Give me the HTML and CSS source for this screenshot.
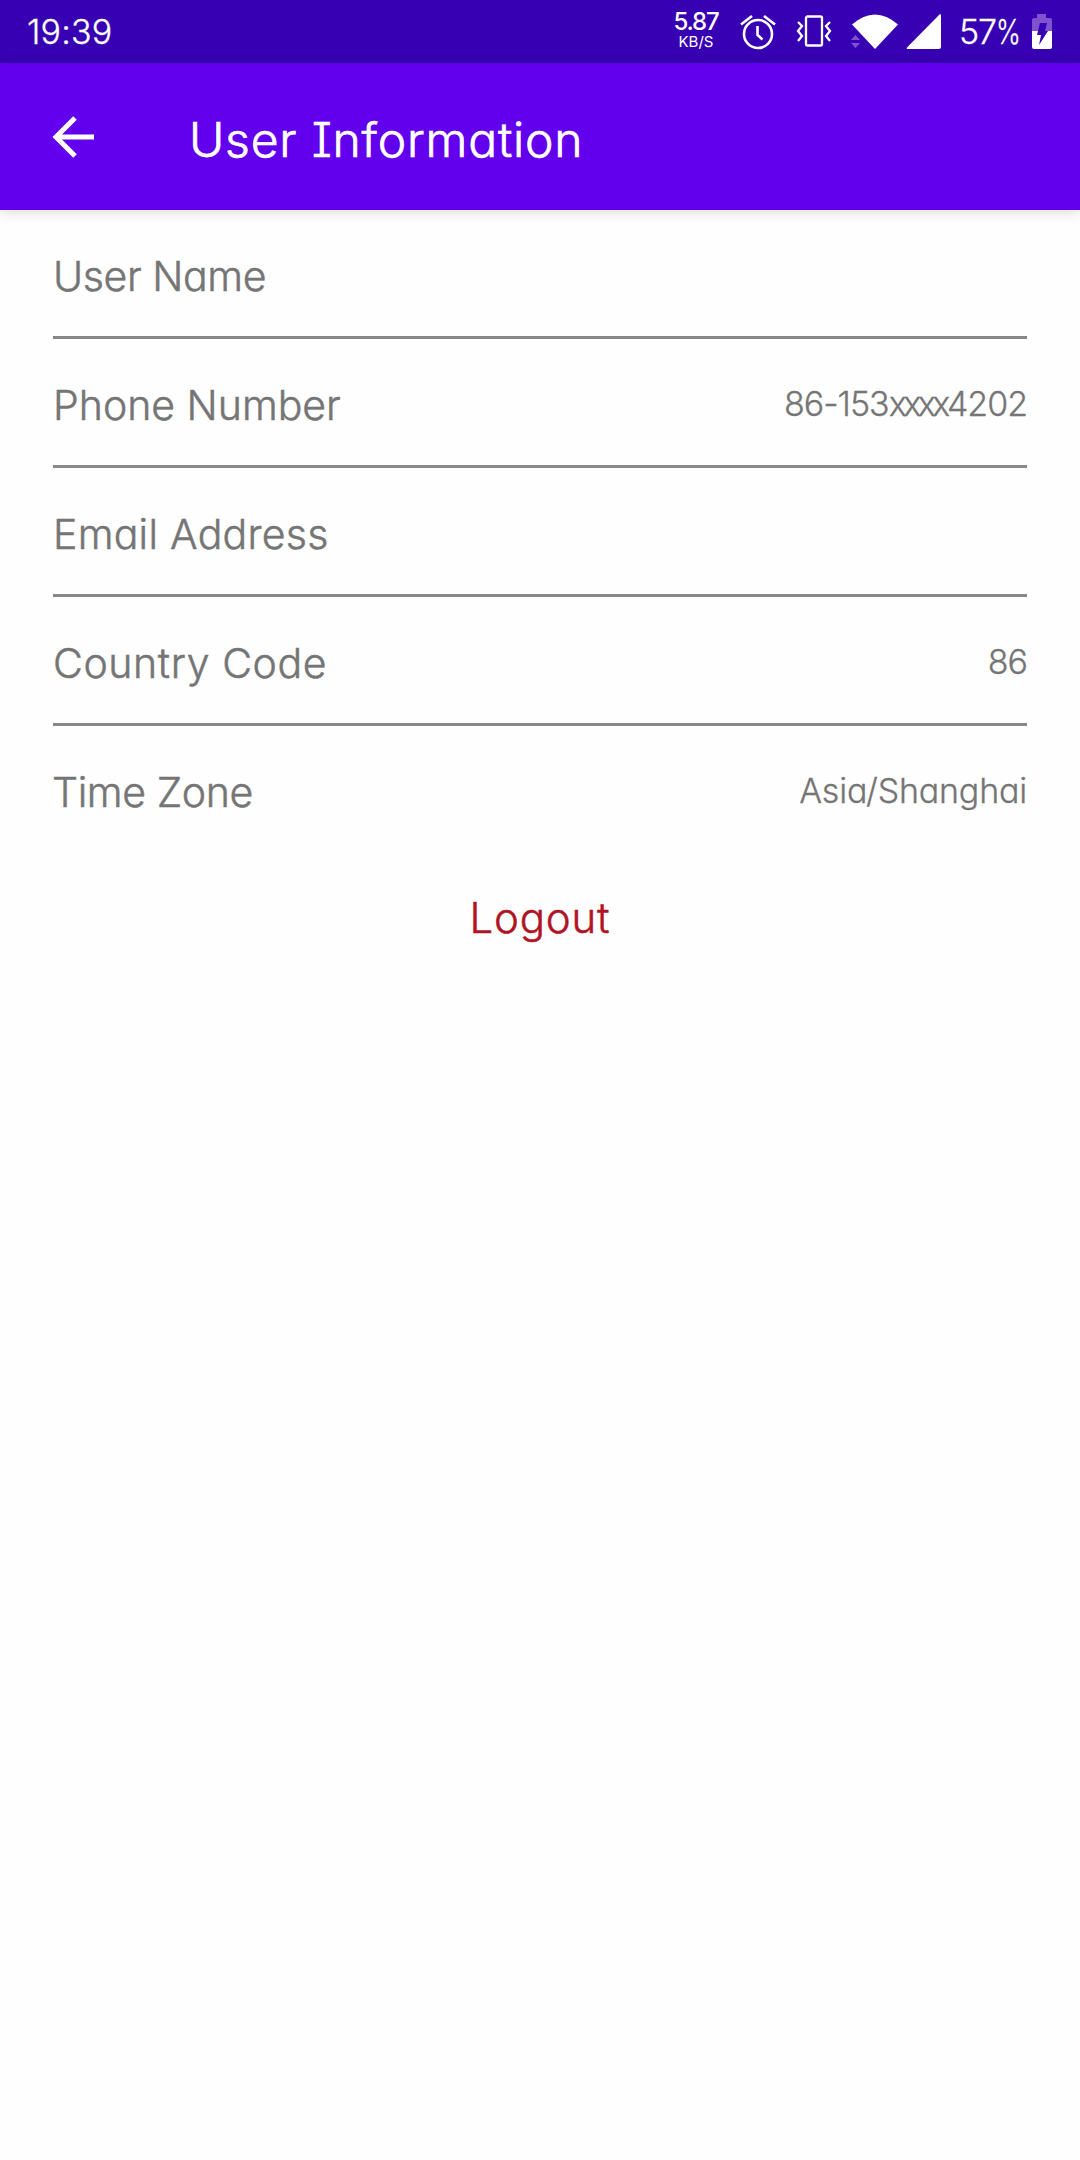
FILE: index.html
```html
<!DOCTYPE html>
<html lang="en">
<head>
<meta charset="utf-8">
<title>User Information</title>
<link rel="stylesheet" href="styles.css">
</head>
<body>
<header class="status-bar">
  <span class="clock">19:39</span>
  <div class="status-icons">
    <div class="net-speed"><span class="speed-value">5.87</span><span class="speed-unit">KB/S</span></div>
    <svg class="alarm" width="38" height="38" viewBox="0 0 38 38" fill="none" stroke="#fff" stroke-width="2.6"><circle cx="19" cy="21" r="14"/><path d="M18.500 13v9l5 4.500M2 11.500l11-8.500M25 3l11 8.500"/></svg>
    <svg class="vibrate" width="36" height="34" viewBox="0 0 36 34" fill="none" stroke="#fff" stroke-width="2.300"><rect x="10" y="2.500" width="16" height="29" rx="1.500"/><path d="M2 8l4 4-4 5 4 5-4 5M34 8l-4 4 4 5-4 5 4 5"/></svg>
    <svg class="wifi" width="48" height="36" viewBox="0 0 48 36"><path fill="#fff" d="M1 10.500Q24-9.500 47 10.500L24 35z"/><path fill="#8052d0" d="M0 26h9l-4.500-5zM0 29h9l-4.500 5z"/></svg>
    <svg class="signal" width="36" height="36" viewBox="0 0 36 36"><path fill="#fff" d="M34 0q1 0 1 1.500V33q0 2-2 2H2q-2 0-1-1.500z"/></svg>
    <span class="battery-text">57<span class="percent">%</span></span>
    <svg class="battery" width="22" height="36" viewBox="0 0 22 36"><path fill="#8052d0" d="M6 0h9v4h4q2 0 2 2v12H1V6q0-2 2-2h3z"/><path fill="#fff" d="M1 17h20v16q0 2-2 2H3q-2 0-2-2z"/><path fill="#3700b3" d="M9 9h7l-2 8h3L8 31l2-10H6z"/></svg>
  </div>
</header>
<nav class="app-bar">
  <svg class="back" width="44" height="44" viewBox="0 0 44 44" fill="none" stroke="#fff" stroke-width="5"><path d="M43 22H5M24 3L5 22l19 19"/></svg>
  <h1 class="title">User Information</h1>
</nav>
<main class="content">
  <div class="row"><span class="label name">User Name</span></div>
  <div class="row"><span class="label phone">Phone Number</span><span class="value number">86-153<span class="masked">xxxx</span>4202</span></div>
  <div class="row"><span class="label email">Email Address</span></div>
  <div class="row"><span class="label country">Country Code</span><span class="value number">86</span></div>
  <div class="row"><span class="label zone">Time Zone</span><span class="value">Asia/Shanghai</span></div>
  <button class="logout">Logout</button>
</main>
</body>
</html>
```
FILE: styles.css
```css
* { box-sizing: border-box; }
body {
  margin: 0;
  min-height: 2160px;
  background: #fefefe;
  color: #757575;
  font-family: Inter, sans-serif;
  font-weight: 300;
  font-feature-settings: "cv11", "cv08";
  -webkit-text-stroke: .3px currentColor;
}
svg { display: block; flex: none; }
.status-bar {
  height: 63px;
  display: flex;
  justify-content: space-between;
  padding: 0 27px;
  background: #3700b3;
  color: #fff;
}
.clock, .battery-text { font-size: 34px; line-height: 63px; }
.clock { letter-spacing: .2px; }
.status-icons { display: flex; align-items: flex-start; }
.net-speed {
  display: flex;
  flex-direction: column;
  align-items: center;
  width: 44px;
  padding-top: 11px;
  -webkit-text-stroke: 0;
}
.speed-value { font-size: 24px; line-height: 22px; font-weight: 500; letter-spacing: -1.2px; }
.speed-unit { font-size: 15px; line-height: 18px; font-weight: 400; }
.alarm { margin: 13px 0 0 21px; }
.vibrate { margin: 14px 0 0 19px; }
.wifi { margin: 14px 0 0 19px; }
.signal { margin: 14px 0 0 7px; }
.battery-text { width: 60px; margin-left: 17px; letter-spacing: -1.2px; white-space: nowrap; }
.percent { display: inline-block; transform: scaleX(.78); transform-origin: left; }
.battery { margin: 14px 0 0 12px; }
.app-bar {
  height: 147px;
  display: flex;
  align-items: center;
  padding: 0 51px;
  background: #6200ee;
  color: #fff;
  box-shadow: 0 2px 12px rgba(0, 0, 0, .14);
}
.title {
  margin: 0 0 0 94px;
  padding-top: 6px;
  font-size: 48px;
  line-height: 60px;
  font-weight: 300;
  letter-spacing: .8px;
  -webkit-text-stroke-width: .7px;
}
.content { padding: 0 53px; }
.row {
  height: 129px;
  display: flex;
  align-items: center;
  justify-content: space-between;
  border-bottom: 3px solid #888;
}
.row:nth-child(5) { border-bottom-color: transparent; }
.label { padding-top: 6px; font-size: 41px; -webkit-text-stroke-width: .5px; }
.value { padding-top: 2px; font-size: 34px; letter-spacing: -.2px; }
.name { letter-spacing: -.4px; }
.phone { letter-spacing: 0; }
.email { letter-spacing: .25px; }
.country { letter-spacing: .6px; }
.zone { margin-left: -1px; letter-spacing: -.4px; }
.number { letter-spacing: -1px; }
.masked { letter-spacing: -3.5px; }
.logout {
  display: block;
  margin: 23px auto 0;
  padding: 0;
  border: 0;
  background: none;
  color: #b01424;
  font: inherit;
  font-size: 42px;
  font-feature-settings: inherit;
  line-height: 80px;
  letter-spacing: .8px;
  -webkit-text-stroke-width: .5px;
}
```
